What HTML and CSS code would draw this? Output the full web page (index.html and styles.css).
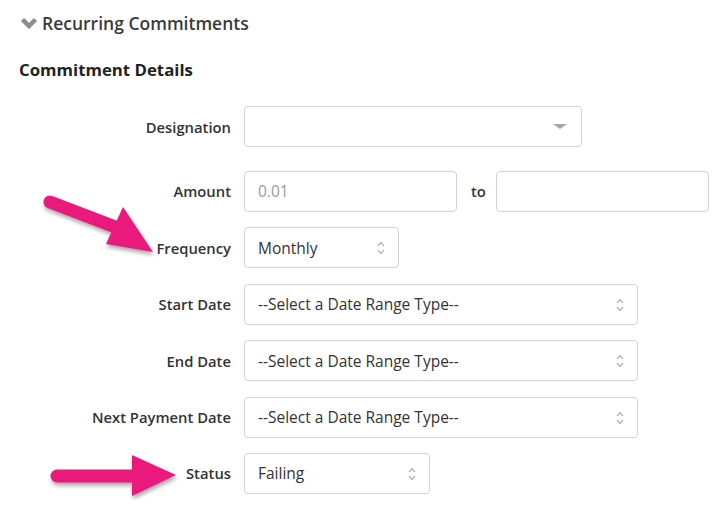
FILE: index.html
```html
<!DOCTYPE html>
<html>
<head>
<link rel="stylesheet" href="styles.css">
</head>
<body>
<div class="page">
  <div class="panel-title">
    <svg class="chevron" width="18" height="12" viewBox="0 0 18 12">
      <polyline points="2.5,2.5 9,9 15.5,2.5" />
    </svg>
    <span>Recurring Commitments</span>
  </div>

  <h3 class="section-title">Commitment Details</h3>

  <div class="form">
    <div class="row row-designation">
      <label>Designation</label>
      <div class="control w-designation">
        <span class="value"></span>
        <svg class="caret" width="14" height="5" viewBox="0 0 14 5"><polygon points="0,0 14,0 7,5" /></svg>
      </div>
    </div>

    <div class="row">
      <label>Amount</label>
      <div class="range">
        <div class="control w-amount"><span class="value placeholder">0.01</span></div>
        <span class="to">to</span>
        <div class="control w-amount"></div>
      </div>
    </div>

    <div class="row">
      <label>Frequency</label>
      <div class="control w-frequency">
        <span class="value">Monthly</span>
        <svg class="updown" width="8" height="14" viewBox="0 0 8 14"><polyline points="1,5 4,1.5 7,5" /><polyline points="1,9 4,12.5 7,9" /></svg>
      </div>
    </div>

    <div class="row">
      <label>Start Date</label>
      <div class="control w-date">
        <span class="value">--Select a Date Range Type--</span>
        <svg class="updown" width="8" height="14" viewBox="0 0 8 14"><polyline points="1,5 4,1.5 7,5" /><polyline points="1,9 4,12.5 7,9" /></svg>
      </div>
    </div>

    <div class="row">
      <label>End Date</label>
      <div class="control w-date">
        <span class="value">--Select a Date Range Type--</span>
        <svg class="updown" width="8" height="14" viewBox="0 0 8 14"><polyline points="1,5 4,1.5 7,5" /><polyline points="1,9 4,12.5 7,9" /></svg>
      </div>
    </div>

    <div class="row">
      <label>Next Payment Date</label>
      <div class="control w-date">
        <span class="value">--Select a Date Range Type--</span>
        <svg class="updown" width="8" height="14" viewBox="0 0 8 14"><polyline points="1,5 4,1.5 7,5" /><polyline points="1,9 4,12.5 7,9" /></svg>
      </div>
    </div>

    <div class="row">
      <label>Status</label>
      <div class="control w-status">
        <span class="value">Failing</span>
        <svg class="updown" width="8" height="14" viewBox="0 0 8 14"><polyline points="1,5 4,1.5 7,5" /><polyline points="1,9 4,12.5 7,9" /></svg>
      </div>
    </div>
  </div>

  <!-- annotation arrows drawn over the screenshot -->
  <svg class="callout callout-frequency" width="140" height="80" viewBox="40 190 140 80">
    <line x1="50" y1="202" x2="118" y2="228" />
    <polygon points="123,207 106,244 153,252" />
  </svg>
  <svg class="callout callout-status" width="150" height="60" viewBox="40 450 150 60">
    <line x1="57" y1="476" x2="136" y2="476" />
    <polygon points="132,455 132,496 176,475" />
  </svg>
</div>
</body>
</html>
```

FILE: styles.css
```css
body {
  margin: 0;
  background: #fff;
  font-family: "Open Sans", "Noto Sans", sans-serif;
  color: #333;
}

.page {
  position: relative;
  width: 726px;
  height: 506px;
  overflow: hidden;
}

.panel-title {
  display: flex;
  align-items: center;
  gap: 4px;
  padding: 10px 0 0 20px;
  height: 26px;
  font-size: 17.5px;
  font-weight: 600;
  color: #3a3a3a;
}

.chevron polyline {
  fill: none;
  stroke: #8c8c8c;
  stroke-width: 4.5;
}

.section-title {
  margin: 22px 0 0 19px;
  font-size: 16.8px;
  font-weight: 700;
  color: #222;
  line-height: 24px;
}

.form {
  display: flex;
  flex-direction: column;
  gap: 15.4px;
  margin-top: 24px;
}

.row {
  display: grid;
  grid-template-columns: 231px auto;
  column-gap: 13px;
  align-items: center;
}

.row-designation {
  margin-bottom: 8.6px;
}

.row label {
  text-align: right;
  font-size: 14.8px;
  font-weight: 600;
  color: #333;
}

.control {
  position: relative;
  box-sizing: border-box;
  height: 41px;
  border: 1px solid #d2d2d2;
  border-radius: 4px;
  display: flex;
  align-items: center;
  padding: 0 13px;
}

.value {
  font-size: 15.5px;
  color: #333;
}

.value.placeholder {
  color: #999;
}

.w-designation { width: 338px; }
.w-amount { width: 213px; }
.w-frequency { width: 155px; }
.w-date { width: 394px; }
.w-status { width: 186px; }

.range {
  display: flex;
  align-items: center;
}

.to {
  margin: 0 10px 0 14px;
  font-size: 14.8px;
  font-weight: 600;
  color: #333;
}

.caret {
  position: absolute;
  right: 14px;
  top: 17px;
}

.caret polygon {
  fill: #a4a4ac;
}

.updown {
  position: absolute;
  right: 13px;
  top: 13px;
}

.updown polyline {
  fill: none;
  stroke: #9a9a9a;
  stroke-width: 1.1;
}

.callout {
  position: absolute;
  filter: drop-shadow(1px 3px 2px rgba(0, 0, 0, 0.35));
}

.callout line {
  stroke: #ea1a7c;
  stroke-width: 13;
  stroke-linecap: round;
}

.callout polygon {
  fill: #ea1a7c;
}

.callout-frequency {
  left: 40px;
  top: 190px;
}

.callout-status {
  left: 40px;
  top: 450px;
}
```
